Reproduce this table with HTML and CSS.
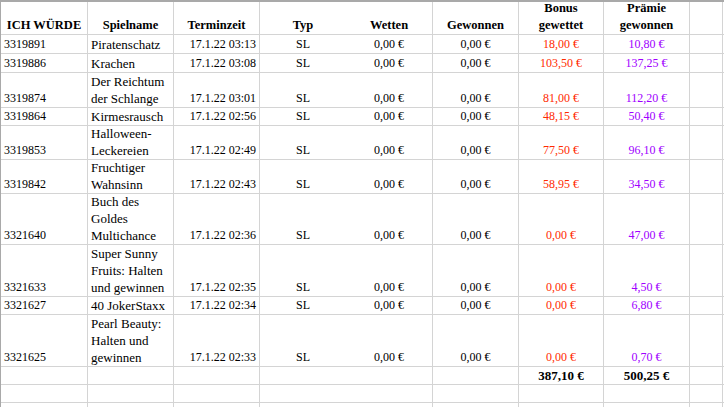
FILE: index.html
```html
<!DOCTYPE html>
<html>
<head>
<meta charset="utf-8">
<link rel="stylesheet" href="styles.css">
</head>
<body>
<div class="sheet">
  <div class="row h-head">
    <div class="c hd">ICH WÜRDE</div>
    <div class="c hd">Spielname</div>
    <div class="c hd">Terminzeit</div>
    <div class="c hd nb">Typ</div>
    <div class="c hd">Wetten</div>
    <div class="c hd">Gewonnen</div>
    <div class="c hd">Bonus<br>gewettet</div>
    <div class="c hd">Prämie<br>gewonnen</div>
    <div class="c"></div>
  </div>

  <div class="row h19">
    <div class="c num">3319891</div><div class="c name">Piratenschatz</div><div class="c num time">17.1.22 03:13</div><div class="c num mid nb">SL</div><div class="c num mid">0,00 €</div><div class="c num mid">0,00 €</div><div class="c num mid red">18,00 €</div><div class="c num mid pur">10,80 €</div><div class="c"></div>
  </div>
  <div class="row h19">
    <div class="c num">3319886</div><div class="c name">Krachen</div><div class="c num time">17.1.22 03:08</div><div class="c num mid nb">SL</div><div class="c num mid">0,00 €</div><div class="c num mid">0,00 €</div><div class="c num mid red">103,50 €</div><div class="c num mid pur">137,25 €</div><div class="c"></div>
  </div>
  <div class="row h35">
    <div class="c num">3319874</div><div class="c name">Der Reichtum<br>der Schlange</div><div class="c num time">17.1.22 03:01</div><div class="c num mid nb">SL</div><div class="c num mid">0,00 €</div><div class="c num mid">0,00 €</div><div class="c num mid red">81,00 €</div><div class="c num mid pur">112,20 €</div><div class="c"></div>
  </div>
  <div class="row h18">
    <div class="c num">3319864</div><div class="c name">Kirmesrausch</div><div class="c num time">17.1.22 02:56</div><div class="c num mid nb">SL</div><div class="c num mid">0,00 €</div><div class="c num mid">0,00 €</div><div class="c num mid red">48,15 €</div><div class="c num mid pur">50,40 €</div><div class="c"></div>
  </div>
  <div class="row h34">
    <div class="c num">3319853</div><div class="c name">Halloween-<br>Leckereien</div><div class="c num time">17.1.22 02:49</div><div class="c num mid nb">SL</div><div class="c num mid">0,00 €</div><div class="c num mid">0,00 €</div><div class="c num mid red">77,50 €</div><div class="c num mid pur">96,10 €</div><div class="c"></div>
  </div>
  <div class="row h34">
    <div class="c num">3319842</div><div class="c name">Fruchtiger<br>Wahnsinn</div><div class="c num time">17.1.22 02:43</div><div class="c num mid nb">SL</div><div class="c num mid">0,00 €</div><div class="c num mid">0,00 €</div><div class="c num mid red">58,95 €</div><div class="c num mid pur">34,50 €</div><div class="c"></div>
  </div>
  <div class="row h51">
    <div class="c num">3321640</div><div class="c name">Buch des<br>Goldes<br>Multichance</div><div class="c num time">17.1.22 02:36</div><div class="c num mid nb">SL</div><div class="c num mid">0,00 €</div><div class="c num mid">0,00 €</div><div class="c num mid red">0,00 €</div><div class="c num mid pur">47,00 €</div><div class="c"></div>
  </div>
  <div class="row h52">
    <div class="c num">3321633</div><div class="c name">Super Sunny<br>Fruits: Halten<br>und gewinnen</div><div class="c num time">17.1.22 02:35</div><div class="c num mid nb">SL</div><div class="c num mid">0,00 €</div><div class="c num mid">0,00 €</div><div class="c num mid red">0,00 €</div><div class="c num mid pur">4,50 €</div><div class="c"></div>
  </div>
  <div class="row h18">
    <div class="c num">3321627</div><div class="c name">40 JokerStaxx</div><div class="c num time">17.1.22 02:34</div><div class="c num mid nb">SL</div><div class="c num mid">0,00 €</div><div class="c num mid">0,00 €</div><div class="c num mid red">0,00 €</div><div class="c num mid pur">6,80 €</div><div class="c"></div>
  </div>
  <div class="row h52">
    <div class="c num">3321625</div><div class="c name">Pearl Beauty:<br>Halten und<br>gewinnen</div><div class="c num time">17.1.22 02:33</div><div class="c num mid nb">SL</div><div class="c num mid">0,00 €</div><div class="c num mid">0,00 €</div><div class="c num mid red">0,00 €</div><div class="c num mid pur">0,70 €</div><div class="c"></div>
  </div>
  <div class="row h18">
    <div class="c"></div><div class="c"></div><div class="c"></div><div class="c nb"></div><div class="c"></div><div class="c"></div><div class="c mid tot">387,10 €</div><div class="c mid tot">500,25 €</div><div class="c"></div>
  </div>
  <div class="row h18">
    <div class="c"></div><div class="c"></div><div class="c"></div><div class="c nb"></div><div class="c"></div><div class="c"></div><div class="c"></div><div class="c"></div><div class="c"></div>
  </div>
  <div class="row h20">
    <div class="c"></div><div class="c"></div><div class="c"></div><div class="c nb"></div><div class="c"></div><div class="c"></div><div class="c"></div><div class="c"></div><div class="c"></div>
  </div>
</div>
</body>
</html>
```
FILE: styles.css
```css
html, body {
  margin: 0;
  padding: 0;
  background: #ffffff;
}
body {
  font-family: "Liberation Serif", "Times New Roman", serif;
  color: #000;
  overflow: hidden;
}
.sheet {
  width: 723px;
  border-top: 2px solid #a9a9a9;
  border-left: 1px solid #a9a9a9;
  display: flex;
  flex-direction: column;
}
.row {
  display: grid;
  grid-template-columns: 87px 86px 86px 86px 87px 86px 85px 86px 33px;
  border-bottom: 1px solid #d4d4d4;
  box-sizing: border-box;
}
.h-head { height: 33px; }
.h18 { height: 18px; }
.h19 { height: 19px; }
.h20 { height: 20px; }
.h34 { height: 34px; }
.h35 { height: 35px; }
.h51 { height: 51px; }
.h52 { height: 52px; }
.c {
  box-sizing: border-box;
  border-right: 1px solid #d4d4d4;
  display: flex;
  flex-direction: column;
  justify-content: flex-end;
  padding: 0 3px;
  line-height: 17px;
  font-size: 13px;
  white-space: nowrap;
  overflow: hidden;
}
.c.nb { border-right: none; }
.hd {
  font-weight: bold;
  font-size: 12.5px;
  text-align: center;
}
.num { font-size: 12px; }
.name { font-size: 13px; }
.time { text-align: right; }
.mid { text-align: center; }
.red { color: #ff2a00; }
.pur { color: #a000ff; }
.tot { font-weight: bold; font-size: 13px; }
```
